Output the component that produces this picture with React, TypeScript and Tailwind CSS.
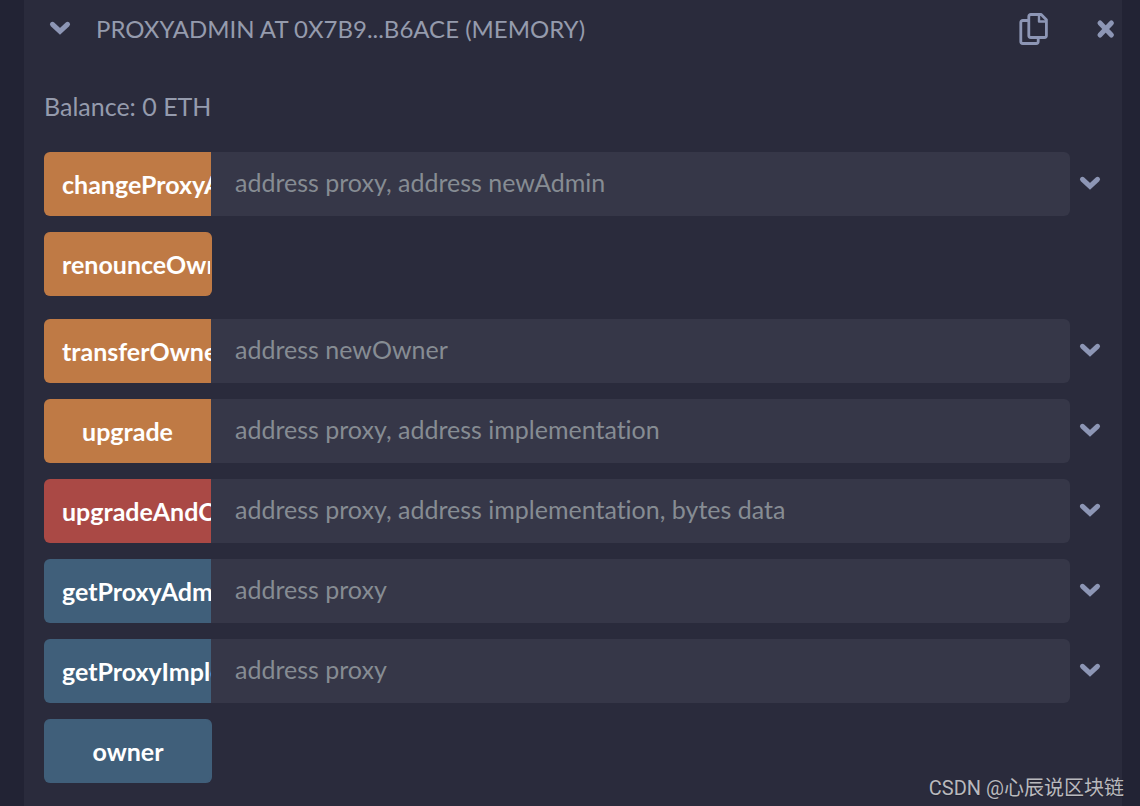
import { useState } from 'react';

type ContractFn = {
  name: string;
  kind: 'write' | 'payable' | 'read';
  inputs?: string;
};

const functions: ContractFn[] = [
  { name: 'changeProxyAdmin', kind: 'write', inputs: 'address proxy, address newAdmin' },
  { name: 'renounceOwnership', kind: 'write' },
  { name: 'transferOwnership', kind: 'write', inputs: 'address newOwner' },
  { name: 'upgrade', kind: 'write', inputs: 'address proxy, address implementation' },
  { name: 'upgradeAndCall', kind: 'payable', inputs: 'address proxy, address implementation, bytes data' },
  { name: 'getProxyAdmin', kind: 'read', inputs: 'address proxy' },
  { name: 'getProxyImplementation', kind: 'read', inputs: 'address proxy' },
  { name: 'owner', kind: 'read' },
];

const kindColor = {
  write: 'bg-[#bf7a45] border-[#bf7a45]',
  payable: 'bg-[#aa4945] border-[#aa4945]',
  read: 'bg-[#405f7a] border-[#405f7a]',
};

function Chevron() {
  return (
    <svg className="h-6 w-6" viewBox="0 0 24 24" fill="none" stroke="currentColor" strokeWidth="5" aria-hidden="true">
      <path d="M4.5 7.3 12 14.3l7.5-7" strokeLinecap="round" />
    </svg>
  );
}

function CopyIcon() {
  return (
    <svg className="h-8 w-8" viewBox="0 0 32 32" fill="none" stroke="currentColor" strokeWidth="2.8" strokeLinejoin="round" aria-hidden="true">
      <path d="M10.5 7.5H4.8a2 2 0 0 0-2 2v19a2 2 0 0 0 2 2h13.4a2 2 0 0 0 2-2v-4" />
      <path d="M12.8 1.5h10.4l5.2 5.2v15.8a2 2 0 0 1-2 2H12.8a2 2 0 0 1-2-2v-19a2 2 0 0 1 2-2z" />
      <path d="M21 2v6.5h6.8" strokeWidth="2.4" />
    </svg>
  );
}

function FunctionRow({ fn }: { fn: ContractFn }) {
  if (!fn.inputs) {
    return (
      <button
        type="button"
        title={fn.name}
        className={`h-16 w-[168px] overflow-hidden whitespace-nowrap rounded-md border-x-2 px-4 font-bold text-white ${kindColor[fn.kind]}`}
      >
        {fn.name}
      </button>
    );
  }
  return (
    <div className="flex items-center">
      <button
        type="button"
        title={fn.name}
        className={`h-16 w-[167px] shrink-0 overflow-hidden whitespace-nowrap rounded-l-md px-[18px] font-bold text-white ${kindColor[fn.kind]}`}
      >
        {fn.name}
      </button>
      <input
        type="text"
        aria-label={`${fn.name} arguments`}
        placeholder={fn.inputs}
        className="h-16 min-w-0 flex-1 rounded-r-md bg-[#363748] px-6 pb-1 text-[#a2a3bd] outline-none placeholder:text-[#868c93]"
      />
      <button type="button" aria-label={`Expand ${fn.name}`} className="ml-2">
        <Chevron />
      </button>
    </div>
  );
}

export default function App() {
  const [open, setOpen] = useState(true);

  // transactions without inputs get a slightly larger gap below them
  return (
    <div className="relative min-h-screen bg-[#222334] pl-6 pr-[18px] font-['Lato','Noto_Sans_CJK_SC',sans-serif] text-[25px] leading-8 text-[#959bad] [font-variant-ligatures:none]">
      <main className="min-h-screen bg-[#2a2b3c] px-5">
        <header className="-mr-5 flex h-[58px] items-center px-1 text-[#8d96b5]">
          <button type="button" aria-label="Toggle contract" onClick={() => setOpen(!open)}>
            <Chevron />
          </button>
          <h1 className="ml-6 flex-1 text-2xl text-[#959bad]">PROXYADMIN AT 0X7B9...B6ACE (MEMORY)</h1>
          <button type="button" aria-label="Copy address">
            <CopyIcon />
          </button>
          <button type="button" aria-label="Remove" className="ml-11">
            <svg className="h-6 w-6" viewBox="0 0 24 24" fill="none" stroke="currentColor" strokeWidth="5" strokeLinecap="round" aria-hidden="true">
              <path d="m6 6 11.4 12M17.4 6 6 18" />
            </svg>
          </button>
        </header>
        {open && (
          <>
            <p className="pt-8 pb-[30px]">Balance: 0 ETH</p>
            <ul className="flex flex-col gap-4 text-[#8d96b5]">
              {functions.map((fn) => (
                <li key={fn.name} className={!fn.inputs && fn.kind === 'write' ? 'mb-[7px]' : ''}>
                  <FunctionRow fn={fn} />
                </li>
              ))}
            </ul>
          </>
        )}
      </main>
      <span className="absolute right-4 bottom-1 font-['Roboto','Noto_Sans_CJK_SC',sans-serif] text-xl text-[#b9b9bd] text-shadow-xs">
        CSDN @心辰说区块链
      </span>
    </div>
  );
}
